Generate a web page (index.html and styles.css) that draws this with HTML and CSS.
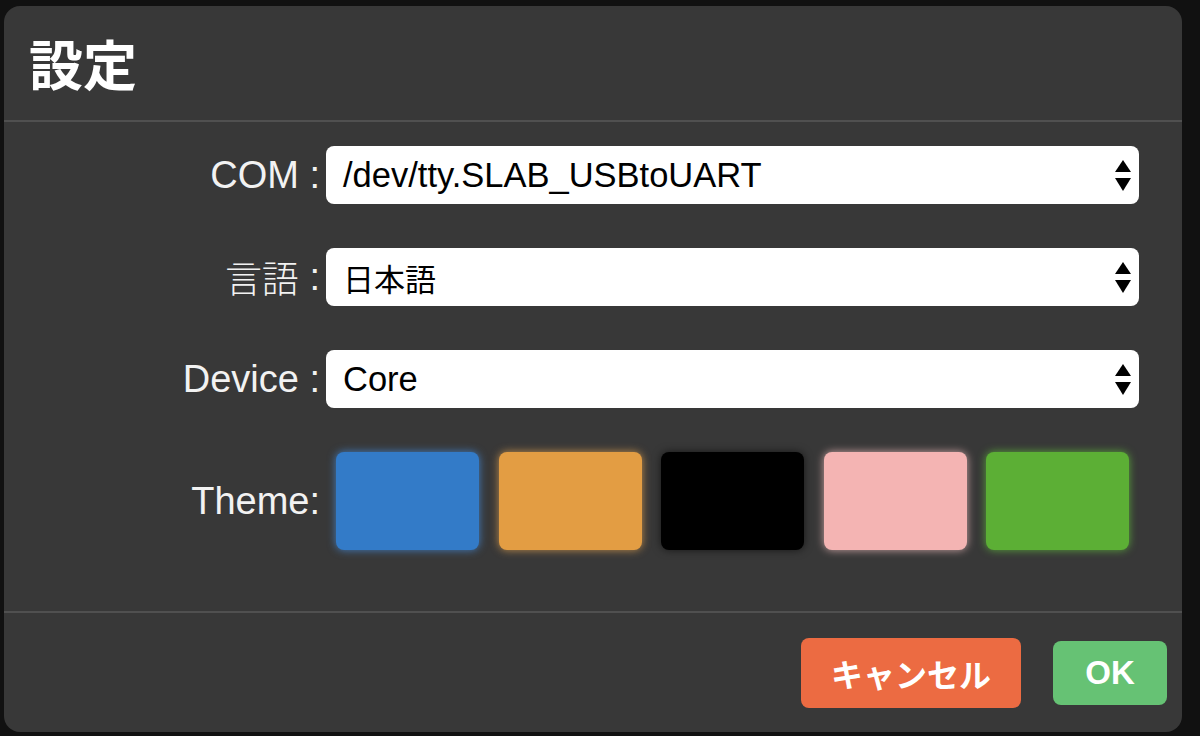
FILE: index.html
```html
<!DOCTYPE html>
<html lang="ja">
<head>
<meta charset="utf-8">
<link rel="stylesheet" href="styles.css">
</head>
<body>
<div class="dialog">
  <div class="header"><h1 class="title">設定</h1></div>
  <div class="content">
    <div class="label">COM :</div>
    <div class="select"><span class="value">/dev/tty.SLAB_USBtoUART</span>
      <svg class="arrows" width="16" height="32" viewBox="0 0 16 32"><polygon points="8,0 16,12 0,12" fill="#000"/><polygon points="0,18 16,18 8,31" fill="#000"/></svg>
    </div>
    <div class="label"><span class="ja">言語</span> :</div>
    <div class="select"><span class="value ja-value">日本語</span>
      <svg class="arrows" width="16" height="32" viewBox="0 0 16 32"><polygon points="8,0 16,12 0,12" fill="#000"/><polygon points="0,18 16,18 8,31" fill="#000"/></svg>
    </div>
    <div class="label">Device :</div>
    <div class="select"><span class="value">Core</span>
      <svg class="arrows" width="16" height="32" viewBox="0 0 16 32"><polygon points="8,0 16,12 0,12" fill="#000"/><polygon points="0,18 16,18 8,31" fill="#000"/></svg>
    </div>
    <div class="label">Theme:</div>
    <div class="themes">
      <div class="swatch blue"></div>
      <div class="swatch orange"></div>
      <div class="swatch black"></div>
      <div class="swatch pink"></div>
      <div class="swatch green"></div>
    </div>
  </div>
  <div class="footer">
    <button class="btn cancel">キャンセル</button>
    <button class="btn ok">OK</button>
  </div>
</div>
</body>
</html>
```
FILE: styles.css
```css
html, body {
  margin: 0;
  padding: 0;
  background: #111111;
}
body {
  width: 1200px;
  height: 736px;
  padding: 6px 18px 4px 4px;
  box-sizing: border-box;
  font-family: "Liberation Sans", "Noto Sans CJK JP", sans-serif;
}
.dialog {
  width: 1178px;
  height: 726px;
  background: #383838;
  border-radius: 16px;
  display: flex;
  flex-direction: column;
  overflow: hidden;
}
.header {
  height: 114px;
  border-bottom: 2px solid #505050;
  display: flex;
  align-items: center;
  padding-left: 25px;
}
.title {
  margin: 0;
  font-family: "Noto Sans CJK JP", sans-serif;
  font-weight: 700;
  font-size: 54px;
  color: #ffffff;
  line-height: 1;
}
.content {
  display: grid;
  grid-template-columns: 316px 1fr;
  column-gap: 6px;
  row-gap: 44px;
  padding: 24px 43px 0 0;
  height: 491px;
  box-sizing: border-box;
  align-content: start;
  border-bottom: 2px solid #505050;
}
.label {
  display: flex;
  align-items: center;
  justify-content: flex-end;
  white-space: pre;
  color: #f2f2f2;
  font-size: 38px;
  font-family: "Liberation Sans", "Noto Sans CJK JP", sans-serif;
}
.ja {
  font-family: "Noto Sans CJK JP", sans-serif;
  font-size: 37px;
  font-weight: 300;
}
.select {
  height: 58px;
  background: #ffffff;
  border-radius: 8px;
  display: flex;
  align-items: center;
  justify-content: space-between;
  padding: 0 8px 0 17px;
}
.value {
  font-size: 34.5px;
  color: #000000;
  font-family: "Liberation Sans", "Noto Sans CJK JP", sans-serif;
}
.ja-value {
  font-family: "Noto Sans CJK JP", sans-serif;
  font-size: 31px;
}
.arrows {
  display: block;
  margin-top: 2px;
}
.themes {
  display: flex;
  gap: 19.5px;
  padding-left: 10px;
  height: 98px;
}
.swatch {
  width: 143px;
  height: 98px;
  border-radius: 8px;
}
.blue { background: #337bc8; box-shadow: 0 0 8px rgba(70, 150, 240, 0.75); }
.orange { background: #e39d43; box-shadow: 0 0 8px rgba(240, 170, 80, 0.75); }
.black { background: #000000; box-shadow: 0 0 8px rgba(0, 0, 0, 0.6); }
.pink { background: #f4b4b3; box-shadow: 0 0 8px rgba(255, 200, 200, 0.75); }
.green { background: #5caf35; box-shadow: 0 0 8px rgba(100, 200, 60, 0.75); }
.footer {
  flex: 1;
  display: flex;
  align-items: center;
  justify-content: flex-end;
  gap: 32px;
  padding-right: 15px;
}
.btn {
  border: none;
  border-radius: 8px;
  color: #ffffff;
  font-weight: 700;
  font-size: 33px;
  font-family: "Liberation Sans", "Noto Sans CJK JP", sans-serif;
  padding: 0;
  display: flex;
  align-items: center;
  justify-content: center;
}
.cancel {
  width: 220px;
  height: 70px;
  background: #ec6b42;
  font-size: 32px;
  font-family: "Noto Sans CJK JP", sans-serif;
}
.ok {
  width: 114px;
  height: 64px;
  background: #66c274;
}
```
